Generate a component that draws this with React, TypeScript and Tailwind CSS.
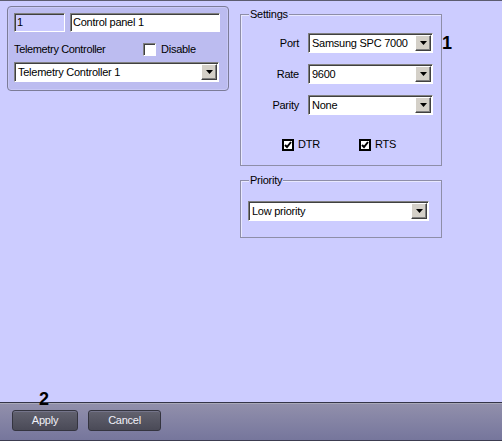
import React from "react";

const font = { fontFamily: '"Liberation Sans", Arial, sans-serif' };

function Arrow() {
  return (
    <svg width="7" height="4" viewBox="0 0 7 4">
      <path d="M0 0h7L3.5 4z" fill="#000" />
    </svg>
  );
}

function Select({ value, className }: { value: string; className: string }) {
  return (
    <div
      className={
        "flex h-[20px] border border-t-[#808080] border-l-[#808080] border-b-white border-r-white bg-white p-[1px] shadow-[inset_1px_1px_0_#404040] " +
        className
      }
    >
      <span className="flex-1 pl-[2px] text-[11px] leading-[16px] tracking-[-0.25px] text-black truncate">
        {value}
      </span>
      <div className="flex w-[16px] h-[16px] items-center justify-center border border-t-white border-l-white border-b-[#404040] border-r-[#404040] bg-[#d4d0c8] shadow-[inset_-1px_-1px_0_#808080]">
        <Arrow />
      </div>
    </div>
  );
}

function FlatCheck({ label, className }: { label: string; className?: string }) {
  return (
    <div className={"flex items-center gap-[4px] " + (className ?? "")}>
      <div className="flex w-[12px] h-[12px] items-center justify-center border-2 border-black bg-white">
        <svg width="8" height="8" viewBox="0 0 8 8">
          <path d="M1 4l2 2 4-5" stroke="#000" strokeWidth="2" fill="none" />
        </svg>
      </div>
      <span className="text-[11px] leading-[13px] tracking-[-0.25px]">{label}</span>
    </div>
  );
}

function Group({
  title,
  className,
  children,
}: {
  title: string;
  className: string;
  children: React.ReactNode;
}) {
  return (
    <div className={"relative border border-[#8e8ea8] shadow-[inset_1px_1px_0_#e8e8ff] " + className}>
      <span className="absolute -top-[7px] left-[8px] bg-[#ccccff] px-[1px] text-[11px] leading-[13px] tracking-[-0.25px]">
        {title}
      </span>
      {children}
    </div>
  );
}

const rows = [
  { label: "Port", value: "Samsung SPC 7000" },
  { label: "Rate", value: "9600" },
  { label: "Parity", value: "None" },
];

export default function App() {
  return (
    <div
      className="flex flex-col w-[502px] h-[441px] overflow-hidden border-t border-[#5c5c70] bg-[#ccccff] text-black"
      style={font}
    >
      <div className="relative flex flex-1 items-start">
        {/* controller panel */}
        <div className="ml-[7px] mt-[5px] w-[222px] h-[85px] rounded-[4px] border border-[#7c7c98] bg-[#bcbcf0] p-[6px] shadow-[inset_0_0_0_1px_#c8c8f6]">
          <div className="flex gap-[5px]">
            <div className="w-[51px] h-[19px] border border-t-[#808080] border-l-[#808080] border-b-white border-r-white bg-[#ccccff] pl-[2px] shadow-[inset_1px_1px_0_#404040] text-[11px] leading-[17px]">
              1
            </div>
            <div className="w-[150px] h-[19px] border border-t-[#808080] border-l-[#808080] border-b-white border-r-white bg-white pl-[2px] shadow-[inset_1px_1px_0_#404040] text-[11px] leading-[17px] tracking-[-0.25px]">
              Control panel 1
            </div>
          </div>
          <div className="flex items-center h-[13px] mt-[11px]">
            <span className="w-[129px] text-[11px] leading-[13px] tracking-[-0.35px]">
              Telemetry Controller
            </span>
            <div className="w-[13px] h-[13px] border border-t-[#808080] border-l-[#808080] border-b-white border-r-white bg-white shadow-[inset_1px_1px_0_#404040]" />
            <span className="ml-[5px] text-[11px] leading-[13px] tracking-[-0.25px]">Disable</span>
          </div>
          <Select value="Telemetry Controller 1" className="mt-[6px] w-[205px]" />
        </div>

        {/* settings column */}
        <div className="ml-[11px] mt-[13px] w-[202px] flex flex-col">
          <Group title="Settings" className="h-[152px] pt-[18px]">
            <div className="flex flex-col gap-[11px]">
              {rows.map((r) => (
                <div key={r.label} className="flex items-center">
                  <span className="w-[59px] pr-[1px] text-right text-[11px] leading-[13px] tracking-[-0.25px]">
                    {r.label}
                  </span>
                  <Select value={r.value} className="ml-[8px] w-[125px]" />
                </div>
              ))}
            </div>
            <div className="flex mt-[23px] pl-[41px]">
              <FlatCheck label="DTR" className="w-[77px]" />
              <FlatCheck label="RTS" />
            </div>
          </Group>
          <Group title="Priority" className="mt-[14px] h-[58px] pt-[20px] pl-[7px]">
            <Select value="Low priority" className="w-[181px]" />
          </Group>
        </div>

        <span className="absolute left-[442px] top-[31px] text-[18px] font-bold leading-[22px]">1</span>
        <span className="absolute left-[39px] top-[388px] z-10 text-[18px] font-bold leading-[20px]">2</span>
      </div>

      {/* bottom bar */}
      <div className="flex h-[39px] gap-[10px] border-t border-b border-t-[#343448] border-b-[#3c3c50] bg-gradient-to-b from-[#9290ac] to-[#76769c] pl-[12px] pt-[7px] shadow-[inset_0_1px_0_#a8a8b8]">
        <button className="w-[66px] h-[21px] rounded-[3px] border border-[#34343f] bg-gradient-to-b from-[#62626f] to-[#4a4a57] text-[11px] tracking-[-0.25px] text-[#f0f0f8] shadow-[inset_0_1px_0_#74748a]">
          Apply
        </button>
        <button className="w-[73px] h-[21px] rounded-[3px] border border-[#34343f] bg-gradient-to-b from-[#62626f] to-[#4a4a57] text-[11px] tracking-[-0.25px] text-[#f0f0f8] shadow-[inset_0_1px_0_#74748a]">
          Cancel
        </button>
      </div>
    </div>
  );
}
